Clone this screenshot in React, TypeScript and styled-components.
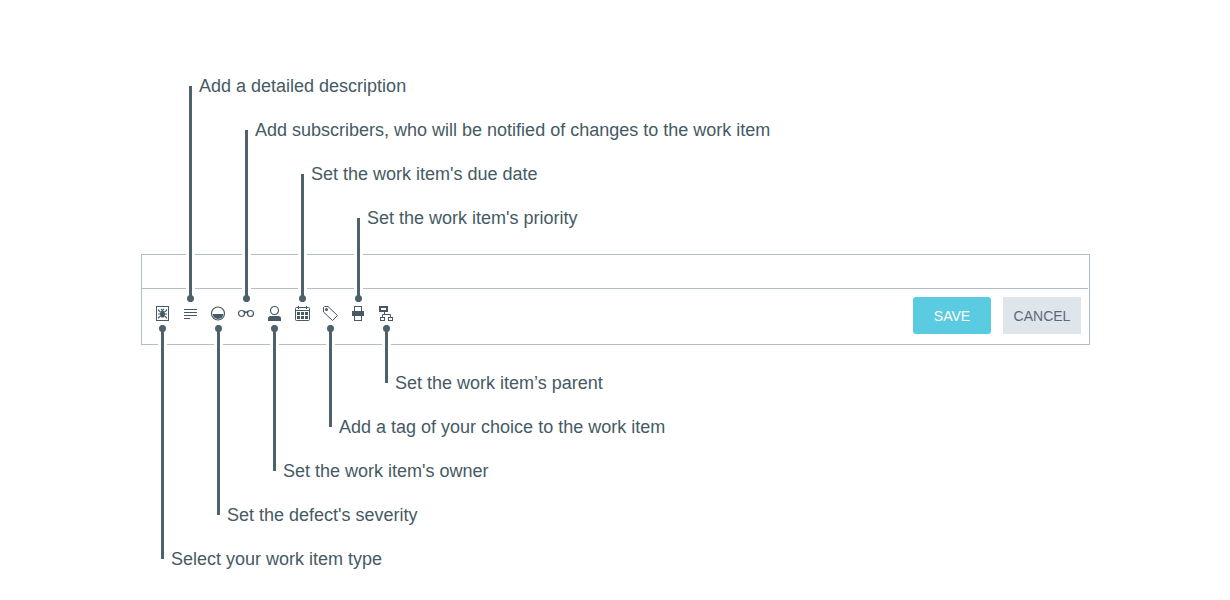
import React, { useId } from "react";
import styled, { createGlobalStyle, css } from "styled-components";

const font = `"Liberation Sans", Arial, sans-serif`;
const ink = "#455a64";
const stem = "#4d626b";
const rule = "#b0bec5";

const GlobalStyle = createGlobalStyle`
  *, *::before, *::after { box-sizing: border-box; }
  body {
    margin: 0;
    background: #fff;
    color: ${ink};
    font-family: ${font};
  }
`;

const Page = styled.main`
  padding: 254px 140px 255px 141px;
`;

const Panel = styled.form`
  display: flex;
  flex-direction: column;
  border: 1px solid ${rule};
`;

const TitleInput = styled.input`
  height: 34px;
  margin: 0 1px 0 0;
  padding: 0 12px;
  border: 0;
  border-bottom: 1px solid ${rule};
  border-radius: 0;
  background: transparent;
  color: ${ink};
  font: 16px ${font};
  outline: none;
`;

const Toolbar = styled.div`
  display: flex;
  align-items: flex-start;
  justify-content: space-between;
  padding: 8px 8px 10px 6px;
`;

const FieldList = styled.ul`
  display: flex;
  margin: 0;
  padding: 0;
  list-style: none;
`;

const Field = styled.li`
  position: relative;
`;

const IconButton = styled.button`
  display: flex;
  align-items: center;
  justify-content: center;
  width: 28px;
  height: 34px;
  padding: 0;
  border: 0;
  background: none;
  color: ${ink};
  cursor: pointer;
`;

const Glyph = styled.svg`
  display: block;
  width: 16px;
  height: 16px;
  overflow: visible;
  fill: none;
  stroke: currentColor;
  stroke-width: 1;
`;

type Side = "above" | "below";

const Callout = styled.div<{ $side: Side; $reach: number }>`
  position: absolute;
  left: 13px;
  display: flex;
  gap: 7px;
  height: ${(p) => p.$reach}px;
  pointer-events: none;
  ${(p) =>
    p.$side === "above"
      ? css`
          bottom: 29px;
          align-items: flex-start;
        `
      : css`
          top: 28px;
          align-items: flex-end;
        `}
`;

const Stem = styled.span<{ $side: Side }>`
  position: relative;
  width: 3px;
  height: calc(100% - 12px);
  background: ${stem};
  box-shadow: -3px 0 #fff, 3px 0 #fff;
  align-self: ${(p) => (p.$side === "above" ? "flex-end" : "flex-start")};

  &::after {
    content: "";
    position: absolute;
    left: -2px;
    ${(p) => (p.$side === "above" ? "bottom: 0;" : "top: 0;")}
    width: 7px;
    height: 7px;
    border-radius: 50%;
    background: ${stem};
  }
`;

const CalloutText = styled.span`
  font-size: 18px;
  line-height: 24px;
  white-space: nowrap;
`;

const Actions = styled.div`
  display: flex;
  gap: 12px;
`;

const ActionButton = styled.button<{ $primary?: boolean }>`
  width: 78px;
  height: 37px;
  padding: 0;
  border: 0;
  border-radius: ${(p) => (p.$primary ? "3px" : "0")};
  background: ${(p) => (p.$primary ? "#5acbe0" : "#dee5eb")};
  color: ${(p) => (p.$primary ? "#fff" : "#5b6876")};
  font: 14px ${font};
  cursor: pointer;
`;

const BugIcon = () => (
  <Glyph viewBox="0 0 16 16">
    <rect x="2.5" y="0.5" width="12" height="14" />
    <ellipse cx="8.5" cy="8.2" rx="2.4" ry="3.4" fill="currentColor" stroke="none" />
    <path
      d="M4.5 3.5v1l2 1.5M12.5 3.5v1l-2 1.5M4 8h9M4.500 12.500v-1l2-1.500M12.500 12.500v-1l-2-1.500M7 3l1.500 1.500L10 3"
      strokeWidth="1.1"
    />
  </Glyph>
);

const LinesIcon = () => (
  <Glyph viewBox="0 0 16 16">
    <path d="M2 3.5h13M2 6.5h13M2 9.5h13M2 12.5h6" />
  </Glyph>
);

const SeverityIcon = () => (
  <Glyph viewBox="0 0 16 16">
    <circle cx="8" cy="7.5" r="6.5" strokeWidth="1.2" />
    <path d="M2.700 8h10.600a5.300 5 0 0 1-10.600 0z" fill="currentColor" stroke="none" />
  </Glyph>
);

const GlassesIcon = () => (
  <Glyph viewBox="0 0 16 16">
    <circle cx="3.5" cy="7.5" r="3" strokeWidth="1.2" />
    <circle cx="12.5" cy="7.5" r="3" strokeWidth="1.2" />
    <path d="M5.5 5.2C7 5 7 6.5 8 6.5s1-1.5 2.5-1.3" strokeWidth="1.6" />
  </Glyph>
);

const PersonIcon = () => (
  <Glyph viewBox="0 0 16 16">
    <circle cx="8.5" cy="4.5" r="4" strokeWidth="1.2" />
    <path d="M2 15v-2.5a2.5 2.5 0 0 1 2.5-2.5h8a2.5 2.5 0 0 1 2.5 2.5v2.5z" fill="currentColor" stroke="none" />
  </Glyph>
);

const CalendarIcon = () => (
  <Glyph viewBox="0 0 16 16">
    <rect x="1.5" y="1.5" width="14" height="13" rx="1" />
    <path d="M1.5 4.5h14M4.5 0v3M12.5 0v3" />
    <path
      d="M3 6h3v3h-3zM7 6h3v3h-3zM11 6h3v3h-3zM3 10h3v3h-3zM7 10h3v3h-3zM11 10h3v3h-3z"
      fill="currentColor"
      stroke="none"
    />
  </Glyph>
);

const TagIcon = () => (
  <Glyph viewBox="0 0 16 16">
    <path d="M1.5 1.5l1-1h3.500l9.500 9-5 5-9-8.500z" strokeLinejoin="round" />
    <circle cx="4.5" cy="3.5" r="1.5" fill="currentColor" stroke="none" />
  </Glyph>
);

const PrinterIcon = () => (
  <Glyph viewBox="0 0 16 16">
    <rect x="4.5" y="0.5" width="7" height="14" />
    <rect x="2" y="5" width="12" height="5" fill="currentColor" stroke="none" />
  </Glyph>
);

const TreeIcon = () => (
  <Glyph viewBox="0 0 16 16">
    <rect x="2" y="1" width="7" height="4" strokeWidth="2" />
    <path d="M6.5 6v2.500M4.5 11v-2.500h8v2.500" />
    <rect x="2.5" y="11.5" width="4" height="3" />
    <rect x="10.5" y="11.5" width="4" height="3" />
  </Glyph>
);

interface FieldSpec {
  text: string;
  side: Side;
  reach: number;
  Icon: React.ComponentType;
}

const fields: FieldSpec[] = [
  { text: "Select your work item type", side: "below", reach: 246, Icon: BugIcon },
  { text: "Add a detailed description", side: "above", reach: 228, Icon: LinesIcon },
  { text: "Set the defect's severity", side: "below", reach: 202, Icon: SeverityIcon },
  {
    text: "Add subscribers, who will be notified of changes to the work item",
    side: "above",
    reach: 184,
    Icon: GlassesIcon,
  },
  { text: "Set the work item's owner", side: "below", reach: 158, Icon: PersonIcon },
  { text: "Set the work item's due date", side: "above", reach: 140, Icon: CalendarIcon },
  { text: "Add a tag of your choice to the work item", side: "below", reach: 114, Icon: TagIcon },
  { text: "Set the work item's priority", side: "above", reach: 96, Icon: PrinterIcon },
  { text: "Set the work item’s parent", side: "below", reach: 70, Icon: TreeIcon },
];

const ToolbarField = ({ text, side, reach, Icon }: FieldSpec) => {
  const id = useId();
  return (
    <Field>
      <IconButton type="button" aria-labelledby={id}>
        <Icon />
      </IconButton>
      <Callout $side={side} $reach={reach}>
        <Stem $side={side} />
        <CalloutText id={id}>{text}</CalloutText>
      </Callout>
    </Field>
  );
};

export default function App() {
  return (
    <>
      <GlobalStyle />
      <Page>
        <Panel onSubmit={(e) => e.preventDefault()}>
          <TitleInput type="text" aria-label="Work item title" />
          <Toolbar>
            <FieldList>
              {fields.map((f) => (
                <ToolbarField key={f.text} {...f} />
              ))}
            </FieldList>
            <Actions>
              <ActionButton type="submit" $primary>
                SAVE
              </ActionButton>
              <ActionButton type="button">CANCEL</ActionButton>
            </Actions>
          </Toolbar>
        </Panel>
      </Page>
    </>
  );
}
